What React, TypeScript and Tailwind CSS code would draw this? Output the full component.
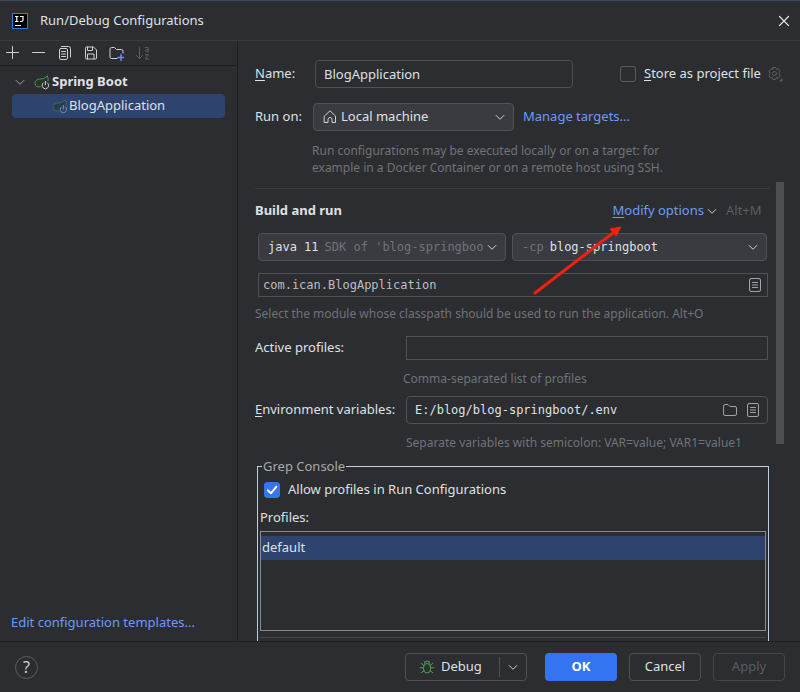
import { useState } from 'react'
import type { ReactNode } from 'react'

interface IconProps {
  className?: string
  children: ReactNode
}

function Icon({ className = '', children }: IconProps) {
  return (
    <svg
      viewBox="0 0 16 16"
      className={`h-4 w-4 shrink-0 ${className}`}
      fill="none"
      stroke="currentColor"
      strokeLinecap="round"
      strokeLinejoin="round"
      aria-hidden="true"
    >
      {children}
    </svg>
  )
}

function ChevronDown({ className = '' }: { className?: string }) {
  return (
    <Icon className={className}>
      <path d="M4.2 6.5 8 10.3 11.8 6.5" />
    </Icon>
  )
}

function SpringIcon({ className = '' }: { className?: string }) {
  return (
    <Icon className={className}>
      <path d="M6.3 12.9C3.3 13.4.9 12 .9 9.5.9 6.6 3.3 5 6.6 4.9 9.6 4.8 11.9 4 13.2 1.7 14.1 3.5 14.4 5.4 14 7" stroke="#549159" fill="#253627" />
      <path d="M9.3 8.9A3.3 3.3 0 1 0 13.5 8.9M11.4 7.4V10.8" stroke="#ced0d6" />
    </Icon>
  )
}

function ListIcon() {
  return (
    <Icon className="text-[#a0a3a9]">
      <rect x="2.5" y="1.5" width="11" height="13" rx="1.5" />
      <path d="M5.5 5.5H10.5M5.5 8H10.5M5.5 10.5H10.5" />
    </Icon>
  )
}

function ConfigToolbar() {
  const button = 'flex h-4 w-4 items-center justify-center'
  return (
    <div className="flex h-[25px] items-center gap-[10px] border-b border-[#1e1f22] pl-1 text-[#ced0d6]">
      <button className={button} aria-label="Add">
        <Icon><path d="M8.5 1.5V13.5M2.5 7.5H14.5" /></Icon>
      </button>
      <button className={button} aria-label="Remove">
        <Icon><path d="M2.5 7.5H14.5" /></Icon>
      </button>
      <button className={button} aria-label="Copy">
        <Icon>
          <rect x="3.5" y="3.5" width="8" height="11" rx="1.5" />
          <path d="M5.5 1.5H12.5A2 2 0 0 1 14.5 3.5V12M5.5 6.5H9.5M5.5 9H9.5M5.5 11.5H9.5" />
        </Icon>
      </button>
      <button className={button} aria-label="Save">
        <Icon>
          <path d="M3.5 3A1 1 0 0 1 4.5 2H11.5L14.5 5V13A1 1 0 0 1 13.5 14H4.5A1 1 0 0 1 3.5 13ZM5.5 2V5.5H10.5V2M5.5 14V9H12V14" />
        </Icon>
      </button>
      <button className={button} aria-label="New folder">
        <Icon>
          <path d="M9 13.5H3.5A1.5 1.5 0 0 1 2 12V4A1.5 1.5 0 0 1 3.5 2.5H6.5L8.5 4.5H13.5A1.5 1.5 0 0 1 15 6V8" />
          <path d="M13 9.5V15.5M10 12.5H16" stroke="#6b8ff7" strokeWidth="1.4" />
        </Icon>
      </button>
      <button className={`${button} text-[#5a5d63]`} aria-label="Sort" disabled>
        <Icon>
          <path d="M5.5 2.5V13.5M2.5 10.5 5.5 13.5 8.5 10.5" />
          <path d="M11.2 2.4H13.2Q14.2 2.4 14.2 3.4V6.6M14.2 4.6H12.4A1 1 0 0 0 12.4 6.6H14.2M11.4 9.8H14.4L11.2 14H14.6" />
        </Icon>
      </button>
    </div>
  )
}

function Sidebar() {
  return (
    <aside className="flex w-[238px] shrink-0 flex-col border-r border-[#1e1f22]">
      <ConfigToolbar />
      <ul className="px-3 pt-1">
        <li>
          <div className="flex h-6 items-center font-bold">
            <ChevronDown className="text-[#9da0a8]" />
            <SpringIcon className="mr-[2px] ml-[6px]" />
            Spring Boot
          </div>
          <ul>
            <li className="flex h-6 items-center rounded bg-[#2e436e] pl-10">
              <SpringIcon className="mr-px opacity-50" />
              BlogApplication
            </li>
          </ul>
        </li>
      </ul>
      <a href="#templates" className="mt-auto mb-[11px] ml-[11px] leading-4 text-[#6b9bfa]">
        Edit configuration templates...
      </a>
    </aside>
  )
}

function TargetSection() {
  const [stored, setStored] = useState(false)

  return (
    <section className="pt-[18px] pl-[17px]">
      <div className="flex h-7 items-center">
        <label htmlFor="name" className="w-[60px]">
          <span className="underline underline-offset-2">N</span>ame:
        </label>
        <input
          id="name"
          defaultValue="BlogApplication"
          className="h-7 w-[258px] rounded border border-[#4e5157] bg-transparent px-2 outline-none"
        />
        <label className="ml-[47px] flex items-center gap-2">
          <input
            type="checkbox"
            checked={stored}
            onChange={e => setStored(e.target.checked)}
            className="h-4 w-4 appearance-none rounded-[3px] border border-[#5a5d63] checked:bg-[#3574f0]"
          />
          <span>
            <span className="underline underline-offset-2">S</span>tore as project file
          </span>
        </label>
        <button aria-label="Storage settings" className="ml-[6px] text-[#5a5d63]">
          <Icon>
            <path d="M6.2 1.5H8.8L9.4 3.3 11.3 2.9 13 5.4 12 7.5 13 9.6 11.3 12.1 9.4 11.7 8.8 13.5H6.2L5.6 11.7 3.7 12.1 2 9.6 3 7.5 2 5.4 3.7 2.9 5.6 3.3Z" />
            <circle cx="7.5" cy="7.5" r="2" />
            <path d="M15.5 12V15.5H12Z" fill="currentColor" stroke="none" />
          </Icon>
        </button>
      </div>
      <div className="mt-[15px] flex h-7 items-center">
        <label htmlFor="target" className="w-[58px]">Run on:</label>
        <div className="flex h-7 w-[201px] items-center rounded border border-[#4e5157] bg-[#393b40] pr-[5px] pl-2">
          <Icon className="text-[#ced0d6]">
            <path d="M2.5 7 8 1.8 13.5 7V13.5H10V10.5A2 2 0 0 0 6 10.5V13.5H2.5Z" />
          </Icon>
          <select id="target" className="ml-[3px] flex-1 appearance-none bg-transparent outline-none">
            <option>Local machine</option>
          </select>
          <ChevronDown className="pointer-events-none text-[#ced0d6]" />
        </div>
        <a href="#targets" className="ml-[9px] text-[#6b9bfa]">Manage targets...</a>
      </div>
      <p className="mt-[11px] ml-[57px] max-w-[380px] text-xs leading-[17px] text-[#6f737a]">
        Run configurations may be executed locally or on a target: for
        <br />
        example in a Docker Container or on a remote host using SSH.
      </p>
    </section>
  )
}

function BuildSection() {
  return (
    <section className="relative border-t border-[#393b40] pt-3">
      <div className="flex h-5 items-center pr-1">
        <h2 className="font-bold">Build and run</h2>
        <button className="ml-auto flex items-center text-[#6b9bfa]">
          <span>
            <span className="underline underline-offset-2">M</span>odify options
          </span>
          <ChevronDown className="text-[#ced0d6]" />
        </button>
        <span className="ml-[6px] min-w-10 text-[#5a5d63]">Alt+M</span>
      </div>

      <div className="mt-3 mr-[3px] ml-[3px] flex gap-[6px] font-['DejaVu_Sans_Mono',monospace] text-xs">
        <label className="flex h-7 w-[248px] items-center rounded border border-[#4e5157] bg-[#393b40] pr-[5px] pl-[9px]">
          <select aria-label="JDK" className="shrink-0 appearance-none bg-transparent field-sizing-content outline-none">
            <option>java 11</option>
          </select>
          <span className="ml-[6px] flex-1 overflow-hidden whitespace-nowrap text-[#6f737a]">SDK of 'blog-springboo</span>
          <ChevronDown className="pointer-events-none text-[#ced0d6]" />
        </label>
        <label className="flex h-7 flex-1 items-center rounded border border-[#4e5157] bg-[#393b40] pr-[5px] pl-[9px]">
          <span className="text-[#6f737a]">-cp</span>
          <select aria-label="Module classpath" className="ml-[6px] flex-1 appearance-none bg-transparent outline-none">
            <option>blog-springboot</option>
          </select>
          <ChevronDown className="pointer-events-none text-[#ced0d6]" />
        </label>
      </div>

      <div className="mt-3 mr-[2px] ml-[3px] flex h-6 items-center border border-[#4e5157] px-1">
        <input
          aria-label="Main class"
          defaultValue="com.ican.BlogApplication"
          className="flex-1 bg-transparent font-['DejaVu_Sans_Mono',monospace] text-xs text-[#bcbec4] outline-none"
        />
        <button aria-label="Browse classes"><ListIcon /></button>
      </div>
      <p className="mt-[9px] text-xs leading-4 text-[#6f737a]">
        Select the module whose classpath should be used to run the application. Alt+O
      </p>

      {/* annotation arrow pointing at Modify options */}
      <svg
        viewBox="0 0 90 70"
        className="pointer-events-none absolute top-9 left-[278px] h-[70px] w-[90px]"
        aria-hidden="true"
      >
        <path d="M2 68 80 8" stroke="#f0210f" strokeWidth="3" strokeLinecap="round" />
        <path d="M88 2 83 11 80.5 8 77 4Z" fill="#f0210f" stroke="#f0210f" strokeLinejoin="round" />
      </svg>
    </section>
  )
}

function EnvironmentSection() {
  return (
    <section className="mt-[14px] mr-[2px]">
      <div className="flex items-center">
        <label htmlFor="profiles" className="w-[151px]">Active profiles:</label>
        <input id="profiles" className="h-6 flex-1 border border-[#4e5157] bg-transparent px-2 outline-none" />
      </div>
      <p className="mt-[11px] ml-[148px] text-xs leading-4 text-[#6f737a]">Comma-separated list of profiles</p>
      <div className="mt-[9px] flex items-center">
        <label htmlFor="env" className="w-[151px]">
          <span className="underline underline-offset-2">E</span>nvironment variables:
        </label>
        <div className="flex h-7 flex-1 items-center gap-[7px] rounded border border-[#4e5157] pr-[6px] pl-2">
          <input
            id="env"
            defaultValue="E:/blog/blog-springboot/.env"
            className="min-w-0 flex-1 bg-transparent font-['DejaVu_Sans_Mono',monospace] text-xs outline-none"
          />
          <button aria-label="Browse files">
            <Icon className="text-[#a0a3a9]">
              <path d="M1.5 4A1.5 1.5 0 0 1 3 2.5H6L8 4.5H13A1.5 1.5 0 0 1 14.5 6V12A1.5 1.5 0 0 1 13 13.5H3A1.5 1.5 0 0 1 1.5 12Z" />
            </Icon>
          </button>
          <button aria-label="Edit variables"><ListIcon /></button>
        </div>
      </div>
      <p className="mt-[11px] ml-[151px] text-xs leading-4 text-[#6f737a]">
        Separate variables with semicolon: VAR=value; VAR1=value1
      </p>
    </section>
  )
}

function GrepConsole() {
  const [allowed, setAllowed] = useState(true)

  return (
    <fieldset className="mt-[7px] mr-px ml-[2px] border border-[#bcd0e0] px-[2px] pb-4">
      <legend className="ml-[2px] px-px leading-4 text-[#a9a9a9]">Grep Console</legend>
      <label className="mt-2 ml-1 flex h-4 items-center gap-2">
        <span className="relative h-4 w-4">
          <input
            type="checkbox"
            checked={allowed}
            onChange={e => setAllowed(e.target.checked)}
            className="block h-4 w-4 appearance-none rounded-[3px] border border-[#5a5d63] checked:border-[#3574f0] checked:bg-[#3574f0]"
          />
          {allowed && (
            <Icon className="pointer-events-none absolute inset-0 text-white">
              <path d="M3.8 8.3 6.8 11.3 12.3 4.8" strokeWidth="2" />
            </Icon>
          )}
        </span>
        Allow profiles in Run Configurations
      </label>
      <div className="mt-[11px] leading-4">Profiles:</div>
      <ul className="mt-[6px] h-[100px] border border-[#868a91] pt-1">
        <li className="flex h-6 items-center bg-[#2e436e] pl-px">default</li>
      </ul>
      <div className="mt-[6px] border-t border-[#43454a]" />
    </fieldset>
  )
}

function Footer() {
  return (
    <footer className="flex h-[51px] shrink-0 items-center border-t border-[#1e1f22] px-[15px]">
      <button aria-label="Help" className="flex h-[23px] w-[23px] items-center justify-center rounded-full border border-[#5a5d63] text-base text-[#ced0d6]">
        ?
      </button>
      <div className="ml-auto flex h-7 rounded border border-[#4e5157]">
        <button className="flex w-[93px] items-center gap-[6px] pl-[13px]">
          <Icon className="text-[#57965c]">
            <path d="M5.5 4.5A2.5 2.5 0 0 1 10.5 4.5M4.5 8A3.5 3.5 0 0 1 11.5 8V10.5A3.5 3.5 0 0 1 4.5 10.5Z" fill="#253627" />
            <path d="M1 8.8H4.5M11.5 8.8H15M2 4.2 5 6.5M14 4.2 11 6.5M2 13.8 5 11.8M14 13.8 11 11.8M5.5 2 6.5 3M10.5 2 9.5 3" />
          </Icon>
          Debug
        </button>
        <button aria-label="More run options" className="my-[3px] flex w-[27px] items-center justify-center border-l border-[#4e5157]">
          <ChevronDown className="text-[#ced0d6]" />
        </button>
      </div>
      <button className="ml-[18px] h-7 w-[72px] rounded bg-[#3574f0] font-bold text-white">OK</button>
      <button className="ml-3 h-7 w-[72px] rounded border border-[#4e5157]">Cancel</button>
      <button className="ml-3 h-7 w-[72px] rounded border border-[#43454a] text-[#5a5d63]" disabled>Apply</button>
    </footer>
  )
}

export default function App() {
  return (
    <div className="flex h-screen flex-col overflow-hidden border-t border-[#3b4658] bg-[#2b2d30] font-['Noto_Sans','Open_Sans',sans-serif] text-[13px] text-[#dfe1e5]">
      <header className="flex h-10 shrink-0 items-center border-b border-[#393b40] pr-2 pl-3">
        <svg viewBox="0 0 16 16" className="h-4 w-4" fill="none" aria-hidden="true">
          <rect x=".5" y=".5" width="15" height="15" fill="#000" stroke="#2f7de0" />
          <path d="M3 3.5H6.5M4.75 3.5V8.5M3 8.5H6.5M8 3.5H11V7Q11 8.5 9.5 8.5H8M3 12.5H9" stroke="#fff" strokeWidth="1.2" />
        </svg>
        <h1 className="ml-3">Run/Debug Configurations</h1>
        <button aria-label="Close" className="ml-auto text-[#dfe1e5]">
          <Icon><path d="M3.5 3.5 12.5 12.5M12.5 3.5 3.5 12.5" strokeWidth="1.2" /></Icon>
        </button>
      </header>

      <div className="flex min-h-0 flex-1">
        <Sidebar />
        <main className="flex min-w-0 flex-1 flex-col pt-px">
          <TargetSection />
          <div className="mt-[6px] flex min-h-0 flex-1 gap-[6px] pr-4 pl-[17px]">
            <div className="min-w-0 flex-1 overflow-hidden pt-[6px]">
              <BuildSection />
              <EnvironmentSection />
              <GrepConsole />
            </div>
            <div className="h-[57%] w-2 bg-[#4d4e51]" />
          </div>
        </main>
      </div>

      <Footer />
    </div>
  )
}
